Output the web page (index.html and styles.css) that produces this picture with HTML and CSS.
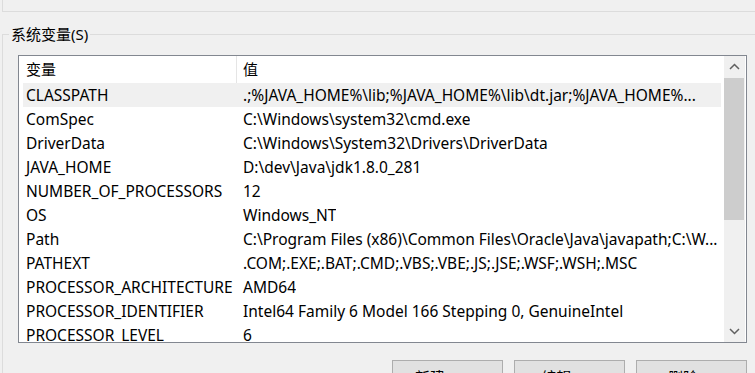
FILE: index.html
```html
<!DOCTYPE html>
<html lang="zh-CN">
<head>
    <meta charset="UTF-8">
    <title>系统变量</title>
    <link rel="stylesheet" href="styles.css">
</head>
<body>
    <div class="prev-group"></div>

    <fieldset class="group">
        <legend>系统变量(S)</legend>
        <div class="group-body">
            <div class="listbox">
                <div class="list-main">
                    <div class="list-header">
                        <div class="col-name">变量</div>
                        <div class="col-value">值</div>
                    </div>
                    <div class="row selected">
                        <div class="col-name">CLASSPATH</div>
                        <div class="col-value">.;%JAVA_HOME%\lib;%JAVA_HOME%\lib\dt.jar;%JAVA_HOME%...</div>
                    </div>
                    <div class="row">
                        <div class="col-name">ComSpec</div>
                        <div class="col-value">C:\Windows\system32\cmd.exe</div>
                    </div>
                    <div class="row">
                        <div class="col-name">DriverData</div>
                        <div class="col-value">C:\Windows\System32\Drivers\DriverData</div>
                    </div>
                    <div class="row">
                        <div class="col-name">JAVA_HOME</div>
                        <div class="col-value">D:\dev\Java\jdk1.8.0_281</div>
                    </div>
                    <div class="row">
                        <div class="col-name">NUMBER_OF_PROCESSORS</div>
                        <div class="col-value">12</div>
                    </div>
                    <div class="row">
                        <div class="col-name">OS</div>
                        <div class="col-value">Windows_NT</div>
                    </div>
                    <div class="row">
                        <div class="col-name">Path</div>
                        <div class="col-value">C:\Program Files (x86)\Common Files\Oracle\Java\javapath;C:\W...</div>
                    </div>
                    <div class="row">
                        <div class="col-name">PATHEXT</div>
                        <div class="col-value">.COM;.EXE;.BAT;.CMD;.VBS;.VBE;.JS;.JSE;.WSF;.WSH;.MSC</div>
                    </div>
                    <div class="row">
                        <div class="col-name">PROCESSOR_ARCHITECTURE</div>
                        <div class="col-value">AMD64</div>
                    </div>
                    <div class="row">
                        <div class="col-name">PROCESSOR_IDENTIFIER</div>
                        <div class="col-value">Intel64 Family 6 Model 166 Stepping 0, GenuineIntel</div>
                    </div>
                    <div class="row">
                        <div class="col-name">PROCESSOR_LEVEL</div>
                        <div class="col-value">6</div>
                    </div>
                </div>

                <!-- vertical scrollbar -->
                <div class="scrollbar">
                    <div class="arrow">
                        <svg width="11" height="7" viewBox="0 0 11 7"><path d="M1 6 L5.5 1.5 L10 6" fill="none" stroke="#606060" stroke-width="1.5"/></svg>
                    </div>
                    <div class="track">
                        <div class="thumb"></div>
                    </div>
                    <div class="arrow">
                        <svg width="11" height="7" viewBox="0 0 11 7"><path d="M1 1 L5.5 5.5 L10 1" fill="none" stroke="#606060" stroke-width="1.5"/></svg>
                    </div>
                </div>
            </div>

            <div class="buttons">
                <button>新建(W)...</button>
                <button>编辑(I)...</button>
                <button>删除(L)</button>
            </div>
        </div>
    </fieldset>
</body>
</html>
```

FILE: styles.css
```css
body {
    margin: 0;
    background-color: #f0f0f0;
    font-family: "Noto Sans", "Noto Sans CJK SC", sans-serif;
    font-size: 15.5px;
    color: #000;
    overflow: hidden;
    height: 373px;
}
.prev-group {
    height: 11px;
    margin-left: 2px;
    border-left: 1px solid #dcdcdc;
    border-bottom: 1px solid #dcdcdc;
}
.group {
    margin: 12px 0 0 2px;
    padding: 0;
    border: 1px solid #dcdcdc;
    border-right: none;
    border-bottom: none;
    min-width: 0;
}
.group legend {
    margin-left: 6px;
    padding: 0 2px;
    font-size: 15px;
    line-height: 20px;
}
.group-body {
    margin-left: 15px;
    padding-top: 11px;
    width: 729px;
}
.listbox {
    height: 286px;
    border: 1px solid #828790;
    background-color: #fff;
    display: flex;
}
.list-main {
    flex: 1;
    padding: 0 3px 0 4px;
    overflow: hidden;
}
.list-header, .row {
    display: flex;
    white-space: nowrap;
}
.list-header {
    height: 27px;
    line-height: 27px;
    font-size: 15px;
}
.row {
    height: 24px;
    line-height: 24px;
}
.row.selected {
    background-color: #f0f0f0;
}
.col-name {
    width: 210px;
    padding-left: 3px;
    flex-shrink: 0;
    overflow: hidden;
}
.list-header .col-name {
    border-right: 1px solid #e5e5e5;
}
.row .col-name {
    width: 211px;
}
.col-value {
    padding-left: 6px;
    overflow: hidden;
}
.scrollbar {
    width: 21px;
    margin-right: 1px;
    background-color: #f0f0f0;
    display: flex;
    flex-direction: column;
}
.arrow {
    height: 21px;
    display: flex;
    align-items: center;
    justify-content: center;
}
.track {
    flex: 1;
    padding-top: 1px;
}
.thumb {
    height: 142px;
    margin: 0 1px 0 0;
    background-color: #cdcdcd;
}
.buttons {
    margin-top: 17px;
    display: flex;
    justify-content: flex-end;
    gap: 11px;
}
.buttons button {
    width: 111px;
    height: 30px;
    padding: 4px 0 0 0;
    border: 1px solid #adadad;
    background-color: #e1e1e1;
    font-family: inherit;
    font-size: 15px;
    line-height: 20px;
    vertical-align: top;
}
```
